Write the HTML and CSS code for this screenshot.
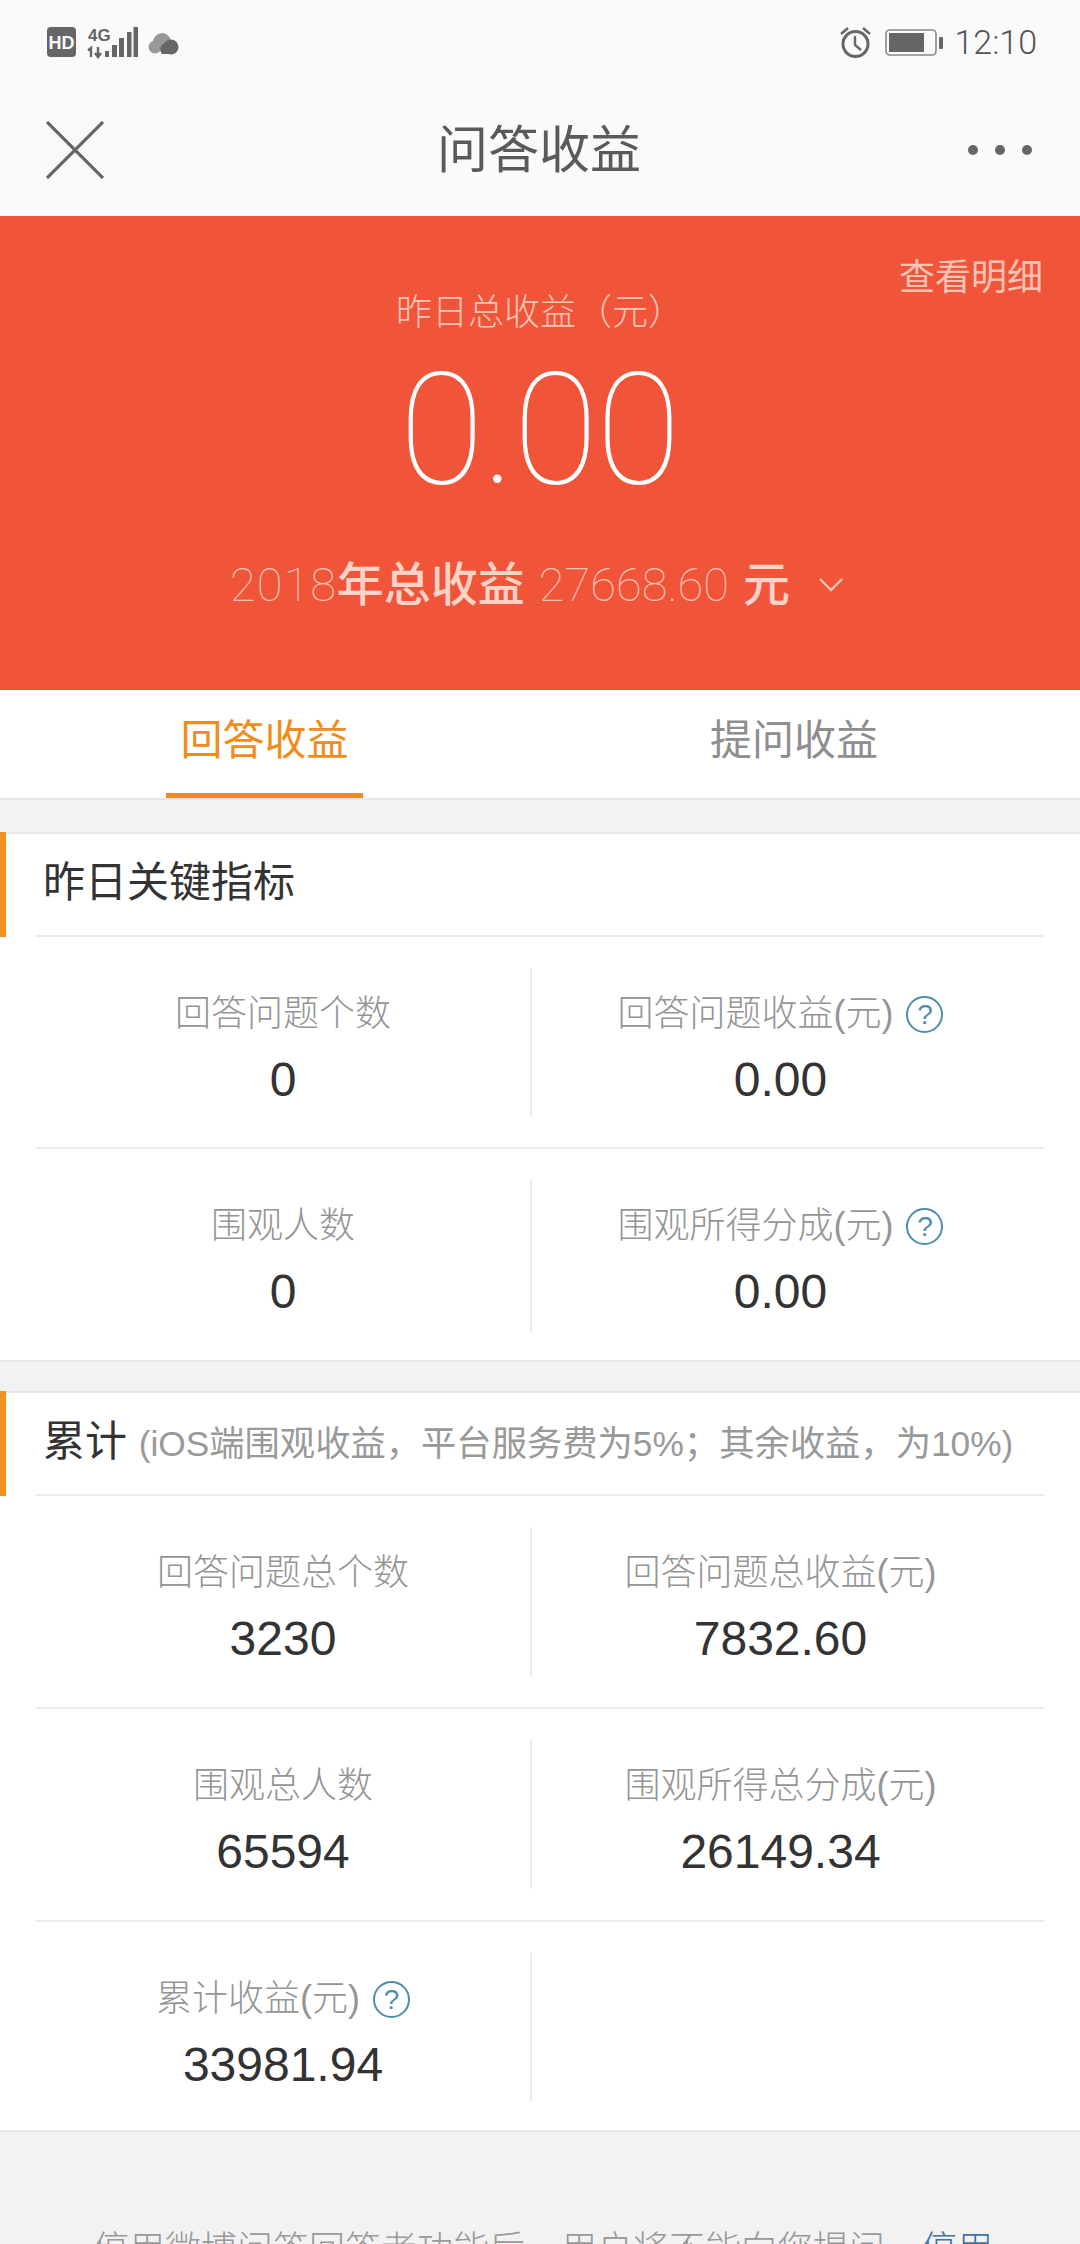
FILE: index.html
```html
<!DOCTYPE html>
<html lang="zh-CN">
<head>
  <meta charset="UTF-8">
  <title>问答收益</title>
  <link rel="stylesheet" href="styles.css">
</head>
<body>
  <div class="status-bar">
    <div class="status-left">
      <svg width="134" height="32" viewBox="0 0 134 32">
        <rect x="0" y="0" width="29" height="30" rx="4" fill="#666"/>
        <text x="14.500" y="22" class="hd-text">HD</text>
        <text x="41" y="14" class="net-text">4G</text>
        <path d="M44 30V21l-3 2.500M51 20v9M48 26l3 4 3-4" stroke="#666" stroke-width="2.400" fill="none"/>
        <rect x="58" y="24" width="4" height="6" fill="#666"/>
        <rect x="65" y="18" width="5" height="12" fill="#666"/>
        <rect x="72" y="11" width="5" height="19" fill="#666"/>
        <rect x="80" y="5" width="4.500" height="25" fill="#666"/>
        <rect x="86.500" y="0" width="4.500" height="30" fill="#666"/>
        <circle cx="108" cy="20" r="6.500" fill="#999"/>
        <circle cx="115" cy="15" r="9" fill="#999"/>
        <circle cx="124" cy="20" r="7.500" fill="#666"/>
        <path d="M115 27c-3-4-2-9 3-11 3-1 5 0 6 2v9z" fill="#666"/>
      </svg>
    </div>
    <div class="status-right">
      <svg width="31" height="33" viewBox="0 0 31 33">
        <circle cx="15.500" cy="18" r="12.500" fill="none" stroke="#666" stroke-width="3"/>
        <path d="M15 10v9l6 5" fill="none" stroke="#666" stroke-width="2.400"/>
        <path d="M1 8l7-6M30 8l-7-6" fill="none" stroke="#666" stroke-width="2.500"/>
      </svg>
      <svg class="battery" width="58" height="27" viewBox="0 0 58 27">
        <rect x="1" y="1" width="50" height="25" rx="4" fill="none" stroke="#888" stroke-width="1.600"/>
        <rect x="4" y="4" width="35" height="19" fill="#666"/>
        <rect x="54" y="8" width="4" height="12" rx="1" fill="#666"/>
      </svg>
      <span class="time">12:10</span>
    </div>
  </div>

  <div class="nav-bar">
    <svg width="58" height="58" viewBox="0 0 58 58">
      <path d="M1 1l56 56M57 1L1 57" stroke="#666" stroke-width="3.200" fill="none"/>
    </svg>
    <div class="nav-title">问答收益</div>
    <div class="nav-more"><i></i><i></i><i></i></div>
  </div>

  <div class="hero">
    <a class="hero-link">查看明细</a>
    <div class="hero-label">昨日总收益（元）</div>
    <div class="hero-amount">0.00</div>
    <div class="hero-year">
      <span class="thin year">2018</span>
      <span class="strong">年总收益</span>
      <span class="thin total">27668.60</span>
      <span class="strong unit">元</span>
      <svg width="26" height="16" viewBox="0 0 26 16">
        <path d="M2 2l11 11L24 2" stroke="#fbc4b4" stroke-width="2.400" fill="none"/>
      </svg>
    </div>
  </div>

  <div class="tabs">
    <div class="tab active"><span>回答收益</span></div>
    <div class="tab"><span>提问收益</span></div>
  </div>

  <div class="card">
    <div class="card-head">昨日关键指标</div>
    <div class="stat-row">
      <div class="stat">
        <div class="stat-label">回答问题个数</div>
        <div class="stat-value">0</div>
      </div>
      <div class="stat">
        <div class="stat-label">回答问题收益(元)<span class="help">?</span></div>
        <div class="stat-value">0.00</div>
      </div>
    </div>
    <div class="stat-row">
      <div class="stat">
        <div class="stat-label">围观人数</div>
        <div class="stat-value">0</div>
      </div>
      <div class="stat">
        <div class="stat-label">围观所得分成(元)<span class="help">?</span></div>
        <div class="stat-value">0.00</div>
      </div>
    </div>
  </div>

  <div class="card card-total">
    <div class="card-head">累计 <small>(iOS端围观收益，平台服务费为5%；其余收益，为10%)</small></div>
    <div class="stat-row">
      <div class="stat">
        <div class="stat-label">回答问题总个数</div>
        <div class="stat-value">3230</div>
      </div>
      <div class="stat">
        <div class="stat-label">回答问题总收益(元)</div>
        <div class="stat-value">7832.60</div>
      </div>
    </div>
    <div class="stat-row">
      <div class="stat">
        <div class="stat-label">围观总人数</div>
        <div class="stat-value">65594</div>
      </div>
      <div class="stat">
        <div class="stat-label">围观所得总分成(元)</div>
        <div class="stat-value">26149.34</div>
      </div>
    </div>
    <div class="stat-row">
      <div class="stat">
        <div class="stat-label">累计收益(元)<span class="help">?</span></div>
        <div class="stat-value">33981.94</div>
      </div>
      <div class="stat"></div>
    </div>
  </div>

  <p class="foot-note">停用微博问答回答者功能后，用户将不能向您提问，<a>停用</a></p>
</body>
</html>
```

FILE: styles.css
```css
* {
  box-sizing: border-box;
}

html, body {
  height: 2244px;
  overflow: hidden;
}

body {
  margin: 0;
  background-color: #f2f2f2;
  font-family: "Liberation Sans", "Noto Sans CJK SC", sans-serif;
  color: #333;
}

.status-bar {
  height: 75px;
  padding: 27px 43px 0 47px;
  display: flex;
  justify-content: space-between;
  align-items: flex-start;
  background-color: #fafafa;
}

.hd-text {
  font-family: "Liberation Sans", sans-serif;
  font-size: 18px;
  font-weight: 700;
  text-anchor: middle;
  fill: #fafafa;
}

.net-text {
  font-family: "Liberation Sans", sans-serif;
  font-size: 17px;
  font-weight: 700;
  fill: #666;
}

.status-right {
  display: flex;
  align-items: center;
  margin-top: -5px;
}

.battery {
  margin-left: 14px;
}

.time {
  margin-left: 11px;
  font-family: "Roboto", sans-serif;
  font-weight: 300;
  font-size: 34px;
  color: #555;
}

.nav-bar {
  height: 141px;
  padding: 0 48px 0 46px;
  display: grid;
  grid-template-columns: 1fr auto 1fr;
  align-items: start;
  background-color: #fafafa;
}

.nav-bar svg {
  margin-top: 46px;
}

.nav-title {
  margin-top: 43px;
  font-size: 51px;
  line-height: 66px;
  color: #5a5a5a;
}

.nav-more {
  justify-self: end;
  display: flex;
  gap: 17px;
  margin-top: 70px;
}

.nav-more i {
  width: 10px;
  height: 10px;
  border-radius: 50%;
  background-color: #666;
}

.hero {
  position: relative;
  height: 474px;
  padding-top: 73px;
  background-color: #f0553a;
  text-align: center;
  color: #fbc4b4;
}

.hero-link {
  position: absolute;
  top: 38px;
  right: 37px;
  font-size: 36px;
  line-height: 48px;
}

.hero-label {
  font-size: 36px;
  line-height: 48px;
  font-weight: 300;
}

.hero-amount {
  margin-top: 5px;
  padding-right: 2px;
  font-family: "Roboto", sans-serif;
  font-weight: 100;
  font-size: 155px;
  line-height: 176px;
  letter-spacing: -2px;
  color: #fff;
}

.hero-year {
  margin-top: 35px;
  padding-right: 6px;
  display: flex;
  justify-content: center;
  align-items: center;
  font-size: 47px;
  line-height: 64px;
}

.hero-year .thin {
  font-family: "Roboto", sans-serif;
  font-weight: 100;
}

.hero-year .year {
  letter-spacing: 1px;
}

.hero-year .strong {
  font-weight: 500;
  color: #fcd3c6;
}

.hero-year .total,
.hero-year .unit {
  margin-left: 14px;
}

.hero-year svg {
  margin-left: 28px;
}

.tabs {
  height: 110px;
  display: grid;
  grid-template-columns: 1fr 1fr;
  background-color: #fff;
  border-bottom: 2px solid #e6e6e6;
}

.tab {
  display: flex;
  justify-content: center;
  font-size: 42px;
  color: #8e8e8e;
}

.tab span {
  height: 108px;
  padding: 22px 14px 0;
  line-height: 58px;
}

.tab.active {
  color: #f08c1a;
  padding-right: 11px;
}

.tab.active span {
  border-bottom: 5px solid #f08c1a;
}

.tab + .tab {
  padding-right: 32px;
}

.card {
  margin-top: 32px;
  padding: 0 36px;
  background-color: #fff;
  border-top: 2px solid #e8e8e8;
  border-bottom: 2px solid #e8e8e8;
}

.card-total {
  margin-top: 29px;
}

.card-head {
  position: relative;
  height: 103px;
  padding-left: 7px;
  line-height: 97px;
  font-size: 42px;
  border-bottom: 2px solid #ececec;
  color: #333;
}

.card-head::before {
  content: "";
  position: absolute;
  left: -36px;
  top: -2px;
  bottom: -2px;
  width: 6px;
  background-color: #f7901e;
}

.card-head small {
  font-size: 35.300px;
  color: #999;
}

.stat-row {
  height: 212px;
  padding: 31px 0;
  display: grid;
  grid-template-columns: 494px 1fr;
  border-bottom: 2px solid #ececec;
}

.card-total .stat-row {
  height: 213px;
}

.stat-row:last-child {
  height: 211px;
  padding-bottom: 28px;
  border-bottom: none;
}

.card-total .stat-row:last-child {
  height: 208px;
}

.stat {
  text-align: center;
}

.stat + .stat {
  padding-right: 15px;
  border-left: 2px solid #ececec;
}

.stat-label {
  margin-top: 24px;
  display: flex;
  justify-content: center;
  align-items: center;
  font-size: 36px;
  line-height: 44px;
  font-weight: 300;
  color: #959595;
}

.help {
  width: 37px;
  height: 37px;
  margin-left: 13px;
  border: 2px solid #4f8eaa;
  border-radius: 50%;
  font-size: 28px;
  line-height: 33px;
  text-align: center;
  color: #4f8eaa;
}

.stat-value {
  margin-top: 17px;
  font-size: 48px;
  line-height: 54px;
  color: #333;
}

.foot-note {
  margin: 93px 0 0;
  padding-left: 93px;
  font-size: 36px;
  line-height: 50px;
  font-weight: 300;
  white-space: nowrap;
  color: #999;
}

.foot-note a {
  color: #3f74a8;
}
```
